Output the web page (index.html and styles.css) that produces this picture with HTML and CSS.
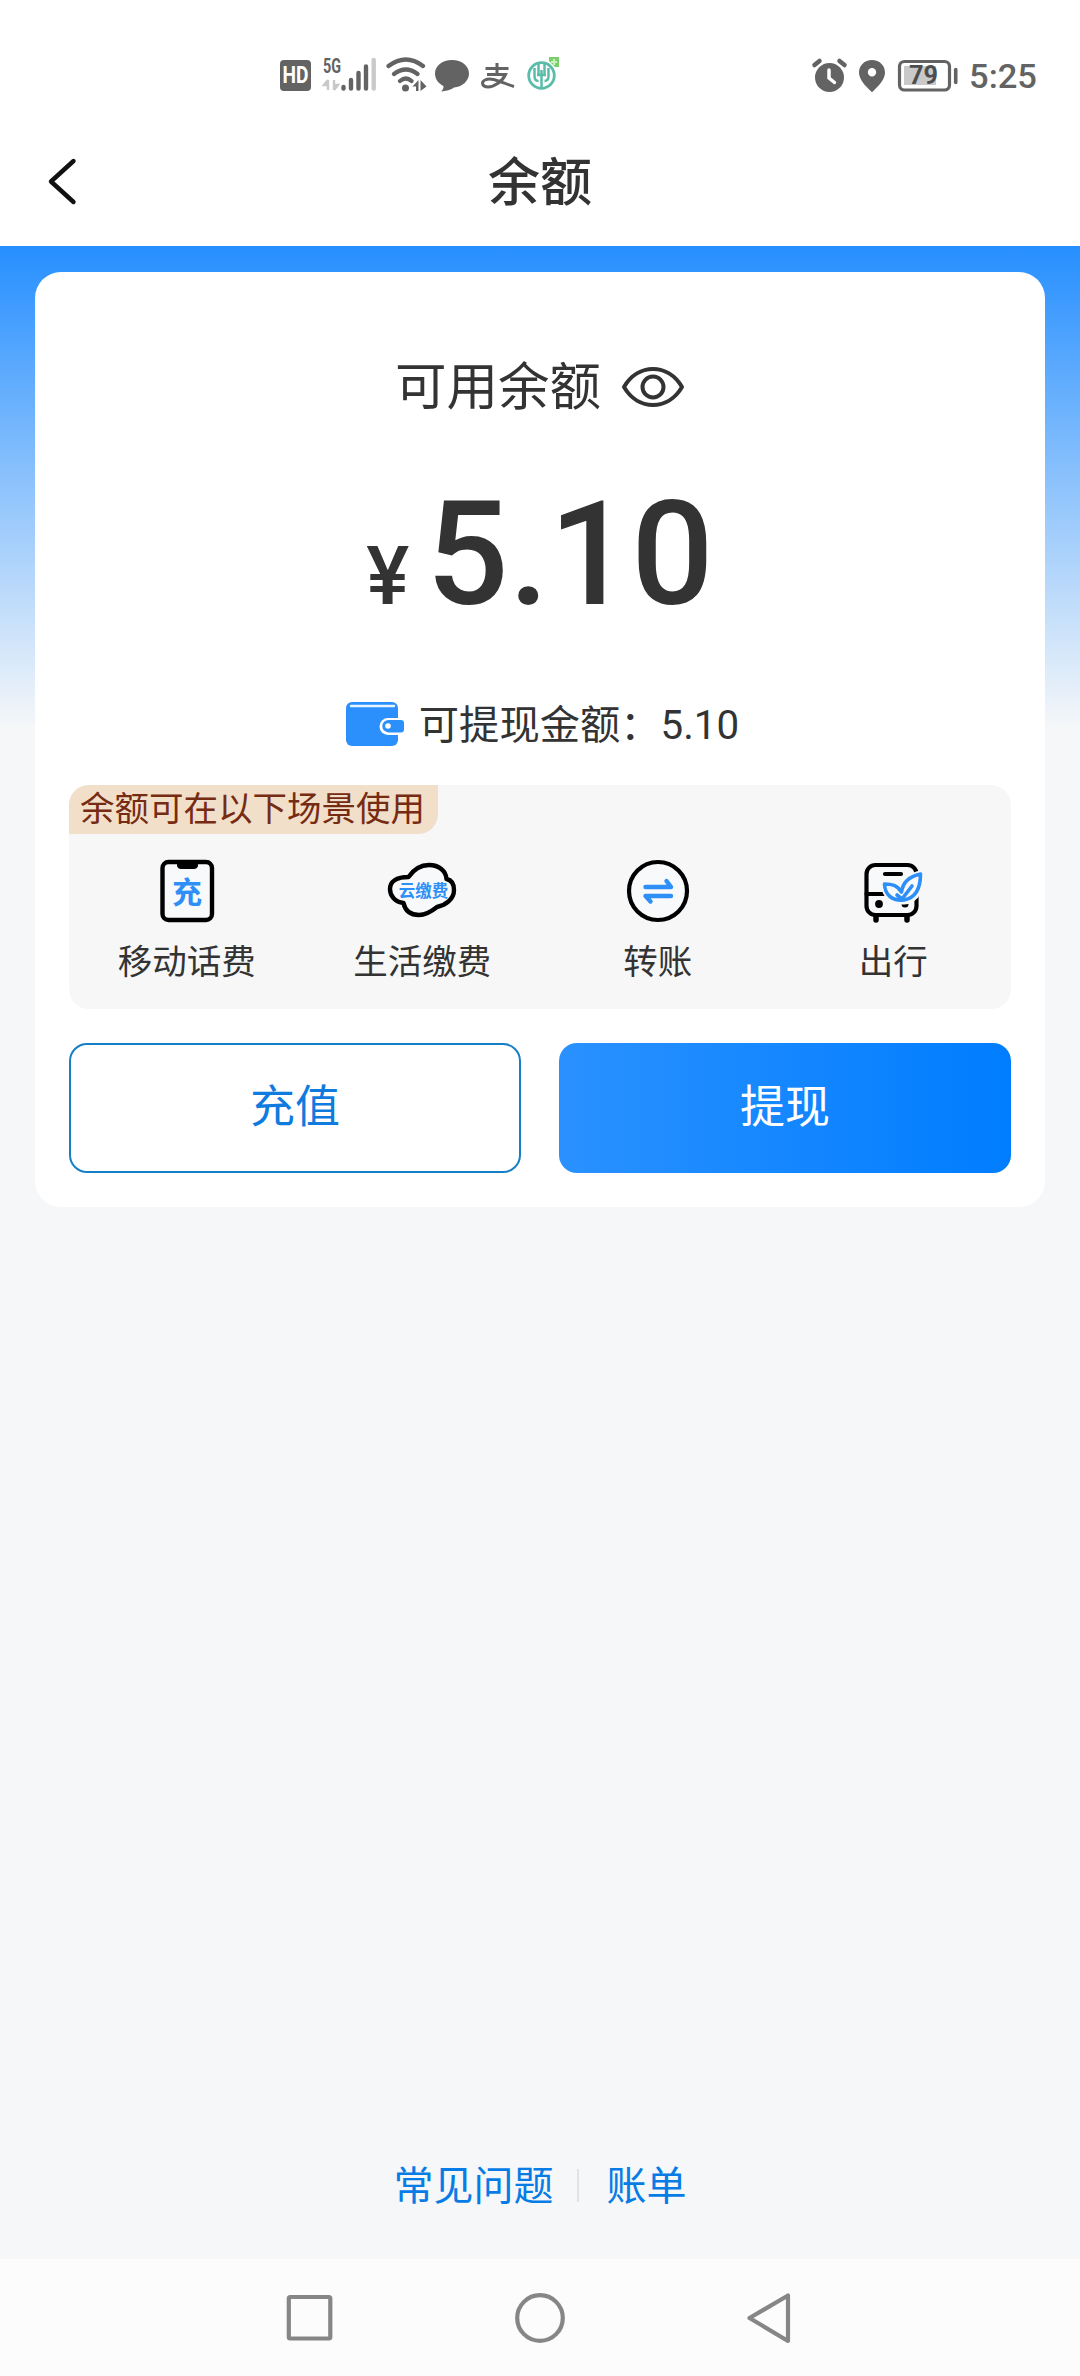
FILE: index.html
```html
<!DOCTYPE html>
<html lang="zh-CN">
<head>
<meta charset="utf-8">
<title>余额</title>
<link rel="stylesheet" href="styles.css">
</head>
<body>
<div class="screen">
  <header class="status-bar">
    <svg class="status-left" width="290" height="44" viewBox="275 52 290 44">
      <rect x="280" y="60" width="31" height="31" rx="4" fill="#636363"/>
      <text x="295.5" y="83" class="st-hd" text-anchor="middle" textLength="26" lengthAdjust="spacingAndGlyphs">HD</text>
      <text x="323" y="73" class="st-5g" textLength="18" lengthAdjust="spacingAndGlyphs">5G</text>
      <path d="M328 80v10M328 80l-4 5h4M334 80v10M334 90l4-5h-4" stroke="#c9c9c9" stroke-width="2.4" fill="#c9c9c9"/>
      <g stroke="#636363" stroke-width="4.4" stroke-linecap="round">
        <path d="M343.500 87v1.500M351 80v8.500M358.500 73v15.500M366 66.500v22"/>
        <path d="M373.700 60v28.500" stroke="#c9c9c9"/>
      </g>
      <g stroke="#636363" stroke-width="4.200" stroke-linecap="round" fill="none">
        <path d="M388.500 66Q406 53 423 66M394 74Q406 65 417.500 74M400 81Q406 76 411.500 81"/>
      </g>
      <circle cx="405.500" cy="88" r="3.500" fill="#636363"/>
      <path d="M412.500 86.500l6-6.500v11h-2.500v-4.500zM420.500 80l6 6.500-6 4.500z" fill="#636363"/>
      <path d="M452 60c10 0 17 6 17 13.500S462 87 454 87.500c-3 2-6 3.500-13 3.800 2-1.500 2.500-3 2.500-5.300-5-2.500-8.500-7-8.500-12.500C435 66 442 60 452 60z" fill="#636363"/>
      <path d="M485.500 68.500h23M497 63v11M487 74.500h18.500C502 82 494 87 488 87c-6 0-7-5-3-7 7-3.500 17 3 29 6.500" fill="none" stroke="#636363" stroke-width="3"/>
      <circle cx="541.500" cy="75.500" r="12.800" fill="none" stroke="#5bbda9" stroke-width="2.800"/>
      <path d="M538.500 62v12M544.500 62v12M541.500 70v19M534.500 68v8q0 5 4 5M548.500 68v8q0 5-4 5M537 75h9" fill="none" stroke="#5bbda9" stroke-width="2.500"/>
      <path d="M549 57h10v10h-4l-6-6z" fill="#79cf6b"/>
      <path d="M554 59v6M551 62h6" stroke="#c9f2bd" stroke-width="2"/>
    </svg>
    <svg class="status-right" width="235" height="44" viewBox="808 52 235 44">
      <circle cx="829.500" cy="77.500" r="14.500" fill="#636363"/>
      <path d="M814.500 65l5-4M839.500 61l5 4" stroke="#636363" stroke-width="4.500" stroke-linecap="round"/>
      <path d="M829 70v8l5.500 4.500" fill="none" stroke="#fff" stroke-width="3.500" stroke-linecap="round"/>
      <path fill-rule="evenodd" d="M872 60c7.500 0 13 5.500 13 12.500 0 7-6 13-13 19.800-7-6.800-13-12.800-13-19.800C859 65.500 864.500 60 872 60zm0 8a4.200 4.200 0 1 0 0 8.400 4.200 4.200 0 0 0 0-8.400z" fill="#636363"/>
      <rect x="899.500" y="61.500" width="50" height="28.500" rx="5" fill="none" stroke="#636363" stroke-width="3.200"/>
      <rect x="904" y="66" width="32" height="19" fill="#c9c9c9"/>
      <path d="M955.700 69.500v13" stroke="#636363" stroke-width="3.600" stroke-linecap="round"/>
      <text x="909" y="84" class="st-batt" textLength="29" lengthAdjust="spacingAndGlyphs">79</text>
      <text x="969" y="88" class="st-time" textLength="68" lengthAdjust="spacingAndGlyphs">5:25</text>
    </svg>
  </header>
  <nav class="title-bar">
    <svg class="back" width="32" height="50" viewBox="0 0 32 50"><path d="M28.500 5L6 25.500 28.500 46" fill="none" stroke="#111" stroke-width="4.400" stroke-linecap="round" stroke-linejoin="round"/></svg>
    <h1 class="title">余额</h1>
  </nav>
  <main class="content">
    <section class="card">
      <div class="avail">
        <span class="avail-label">可用余额</span>
        <svg class="eye" width="64" height="42" viewBox="0 0 64 42" fill="none" stroke="#333" stroke-width="4" stroke-linejoin="round"><path d="M3 21C10 9 21 3 32 3s22 6 29 18C54 33 43 39 32 39S10 33 3 21z"/><circle cx="32" cy="21" r="10.500"/></svg>
      </div>
      <div class="amount"><span class="yen">¥</span><span class="value">5.10</span></div>
      <div class="cash">
        <svg width="60" height="46" viewBox="0 0 60 46"><rect x="1" y="1" width="52" height="44" rx="6" fill="#2b90fb"/><path d="M6 5h43" stroke="#e7f3ff" stroke-width="2.400" stroke-linecap="round"/><path d="M55 17H43a8.500 8.500 0 0 0 0 17h12z" fill="#fff"/><path d="M56 19H43.500a6.200 6.200 0 0 0 0 12.400H56q3 0 3-3v-6.400q0-3-3-3z" fill="#2b90fb"/><circle cx="43" cy="25" r="2.800" fill="#fff"/></svg>
        <span class="cash-label">可提现金额：5.10</span>
      </div>
      <div class="scenes">
        <div class="tag">余额可在以下场景使用</div>
        <div class="scene-list">
          <div class="scene">
            <svg width="70" height="66" viewBox="0 0 70 66"><rect x="10.500" y="4" width="49.500" height="58" rx="6" fill="#f7f9fb" stroke="#000" stroke-width="4.400"/><path d="M25 5h21v3q-1 3-4 3H29q-3 0-4-3z"/><text x="35" y="44.500" class="ico-chong" text-anchor="middle">充</text></svg>
            <span>移动话费</span>
          </div>
          <div class="scene">
            <svg width="70" height="66" viewBox="0 0 70 66"><path d="M21.500 19C27 11 35 7 42 7 52 7 59 13 59.500 21 64 22 67 26 67 32 67 41 59 47 50 49 45 53 39 57 32 57 23 57 18 52 16.500 45 8 44 3 38 3 31 3 24 9 19 21.500 19z" fill="#f7f9fb" stroke="#000" stroke-width="4.400" stroke-linejoin="round"/><text x="36.500" y="38.500" class="ico-cloud" text-anchor="middle">云缴费</text></svg>
            <span>生活缴费</span>
          </div>
          <div class="scene">
            <svg width="70" height="66" viewBox="0 0 70 66"><circle cx="35" cy="33" r="29" fill="#f7f9fb" stroke="#000" stroke-width="4.200"/><path d="M22.500 29h25.500l-4.500-6M48 38H22.500l5 5.500" fill="none" stroke="#2e8ff7" stroke-width="4.400" stroke-linecap="round" stroke-linejoin="round"/></svg>
            <span>转账</span>
          </div>
          <div class="scene">
            <svg width="70" height="66" viewBox="0 0 70 66"><g fill="none" stroke="#000" stroke-width="4.200" stroke-linecap="round"><rect x="8.500" y="7" width="50" height="50" rx="9" fill="#f7f9fb"/><path d="M8.500 36h24M27 16h16"/><path d="M18 59v3M49 59v3" stroke-width="5.500"/></g><circle cx="21" cy="46" r="3.900"/><circle cx="47" cy="46" r="3.500"/><path d="M43.500 32C46.500 22 54 18 62.500 16 63 30 59 42 46 43 34 44 27 37 26.500 26 34 26 39 27 43.500 32z" fill="#f7f9fb" stroke="#f7f9fb" stroke-width="7" stroke-linejoin="round"/><path d="M43.500 34C45 23 53 18 62.500 16 62.500 31 57 40 46 42 34 43 27 37 26.500 26 34 26 39 27 43.500 34zM39 37l5 4 10-13" fill="none" stroke="#2e8ff7" stroke-width="3.600" stroke-linecap="round" stroke-linejoin="round"/></svg>
            <span>出行</span>
          </div>
        </div>
      </div>
      <div class="actions">
        <button class="btn btn-outline">充值</button>
        <button class="btn btn-solid">提现</button>
      </div>
    </section>
    <footer class="links"><a>常见问题</a><i class="divider"></i><a>账单</a></footer>
  </main>
  <div class="system-nav">
    <svg width="520" height="60" viewBox="280 2288 520 60" fill="none" stroke="#868686" stroke-width="4.200" stroke-linejoin="round"><rect x="288.800" y="2297" width="41.500" height="41.500" rx="1.500"/><circle cx="540" cy="2318" r="22.800"/><path d="M749.500 2318L788 2295.500v45.500z"/></svg>
  </div>
</div>
</body>
</html>
```
FILE: styles.css
```css
* { box-sizing: border-box; }
body {
  margin: 0;
  background: #f5f7f9;
  color: #333;
  font-family: Roboto, "Noto Sans CJK SC", sans-serif;
}
.screen { width: 1080px; height: 2376px; display: flex; flex-direction: column; }
.status-bar {
  height: 116px;
  padding: 52px 37px 0 275px;
  display: flex;
  justify-content: space-between;
  background: #fff;
}
.st-hd { font-size: 24px; font-weight: 700; fill: #fff; }
.st-5g { font-size: 20px; font-weight: 700; fill: #636363; }
.st-batt { font-size: 26px; font-weight: 700; fill: #4d4d4d; }
.st-time { font-size: 34px; font-weight: 500; fill: #636363; }
.title-bar {
  height: 130px;
  padding: 0 45px;
  display: grid;
  grid-template-columns: 1fr auto 1fr;
  align-items: center;
  background: #fff;
}
.title { margin: 0; padding-top: 5px; font-size: 52px; font-weight: 500; line-height: 76px; }
.content {
  flex: 1;
  display: flex;
  flex-direction: column;
  justify-content: space-between;
  padding: 26px 35px 50px;
  background: linear-gradient(#268fff 0, #f5f7f9 480px) no-repeat 0 0 / 100% 480px;
}
.card {
  height: 935px;
  padding: 76px 34px 34px;
  border-radius: 26px;
  background: #fff;
  display: flex;
  flex-direction: column;
}
.avail {
  height: 77px;
  display: flex;
  justify-content: center;
  align-items: center;
  gap: 20px;
  font-size: 51.5px;
}
.avail-label { padding-bottom: 8px; }
.amount {
  height: 170px;
  margin-top: 44px;
  display: flex;
  justify-content: center;
  align-items: baseline;
  gap: 17px;
  font-weight: 500;
  line-height: 170px;
}
.yen { font-size: 81px; }
.value { font-size: 145px; }
.cash {
  height: 60px;
  margin-top: 55px;
  padding-left: 4px;
  display: flex;
  justify-content: center;
  align-items: center;
  gap: 14px;
  font-size: 40.3px;
}
.cash-label { padding-bottom: 6px; }
.scenes {
  height: 224px;
  margin-top: 31px;
  border-radius: 20px;
  background: #f7f7f7;
  overflow: hidden;
}
.tag {
  width: 369px;
  height: 49px;
  padding-left: 11px;
  border-radius: 0 0 20px 0;
  background: #f2dfca;
  color: #762b13;
  font-size: 34.5px;
  line-height: 49px;
  white-space: nowrap;
}
.scene-list { display: grid; grid-template-columns: repeat(4, 1fr); padding-top: 24px; }
.scene {
  display: flex;
  flex-direction: column;
  align-items: center;
  gap: 13px;
  font-size: 34.5px;
  line-height: 50px;
}
.ico-chong { font-size: 30px; font-weight: 700; fill: #2e8ff7; }
.ico-cloud { font-size: 16.5px; font-weight: 700; fill: #2e8ff7; }
.actions { display: grid; grid-template-columns: 1fr 1fr; gap: 38px; margin-top: 34px; }
.btn {
  height: 130px;
  padding: 0 0 9px;
  border: 0;
  border-radius: 18px;
  font: inherit;
  font-size: 45px;
}
.btn-outline { border: 2px solid #177fc5; background: #fff; color: #107bde; }
.btn-solid { background: linear-gradient(90deg, #2a91ff, #007dff); color: #fff; }
.links {
  height: 50px;
  display: flex;
  justify-content: center;
  align-items: center;
  font-size: 40px;
  color: #087ce5;
}
.links a { padding-bottom: 3px; }
.divider { width: 2px; height: 33px; margin: 2px 28px 0 23px; background: #e0e3e7; }
.system-nav {
  height: 117px;
  padding-top: 29px;
  display: flex;
  justify-content: center;
  background: #fcfcfc;
}
```
